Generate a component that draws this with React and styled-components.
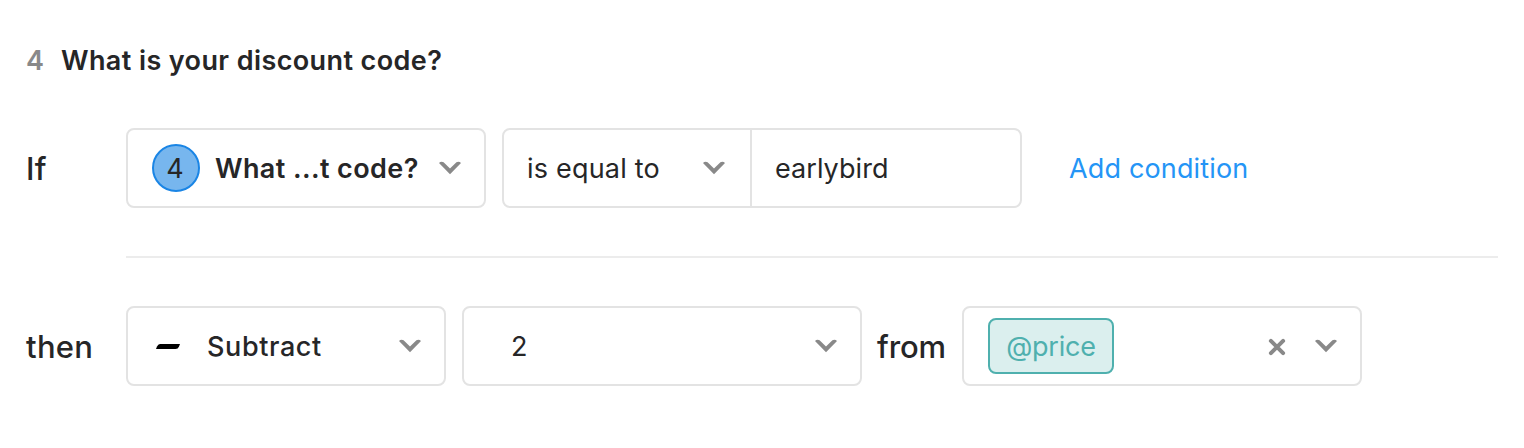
import React from "react";
import styled, { createGlobalStyle } from "styled-components";

const Chevron = () => (
  <ChevronIcon viewBox="0 0 24 16">
    <path d="M1 3 Q2.8 1.2 5.6 2.2 L12 8.5 L18.4 2.2 Q21.2 1.2 23 3 L12 14.3 Z" />
  </ChevronIcon>
);

export default function App() {
  return (
    <Page>
      <GlobalStyle />
      <Question>
        <QuestionNumber>4</QuestionNumber>
        <QuestionTitle>What is your discount code?</QuestionTitle>
      </Question>

      <Row>
        <Label>If</Label>
        <Select $width={360}>
          <Badge>4</Badge>
          <FieldName>What ...t code?</FieldName>
          <Chevron />
        </Select>
        <Comparison>
          <Operator>
            <Text $spacing={0.2}>is equal to</Text>
            <Chevron />
          </Operator>
          <Value>
            <Text $spacing={0.05}>earlybird</Text>
          </Value>
        </Comparison>
        <AddCondition>Add condition</AddCondition>
      </Row>

      <Divider />

      <Row>
        <Label>then</Label>
        <Select $width={320}>
          <MinusIcon viewBox="0 0 24 5">
            <path d="M4 0 H24 L23 2.5 Q22 5 19.5 5 H0 L1 2.5 Q2 0 4 0 Z" />
          </MinusIcon>
          <Text $spacing={0.6} $weight={500}>
            Subtract
          </Text>
          <Chevron />
        </Select>
        <Select $width={400} $indent={47}>
          <Text>2</Text>
          <Chevron />
        </Select>
        <From>from</From>
        <Select $width={400}>
          <Tag>@price</Tag>
          <ClearIcon viewBox="0 0 18 18">
            <path d="M2.9 2.9 L15.1 15.1 M15.1 2.9 L2.9 15.1" />
          </ClearIcon>
          <Chevron />
        </Select>
      </Row>
    </Page>
  );
}

const GlobalStyle = createGlobalStyle`
  * {
    box-sizing: border-box;
  }
  body {
    margin: 0;
    background: #fff;
    color: #262627;
    font-family: Inter, "Liberation Sans", sans-serif;
    font-size: 27px;
  }
`;

const Page = styled.div`
  height: 448px;
  padding: 40px 26px 0;
`;

const Question = styled.div`
  display: flex;
  height: 40px;
  line-height: 41px;
  font-weight: 600;
`;

const QuestionNumber = styled.span`
  width: 35px;
  color: #898989;
`;

const QuestionTitle = styled.span`
  letter-spacing: 0.4px;
`;

const Row = styled.div`
  display: flex;
  align-items: center;
  height: 80px;
  margin-top: 48px;
  white-space: nowrap;
`;

const Label = styled.span`
  width: 100px;
  padding-top: 1px;
  font-size: 31px;
  font-weight: 500;
  letter-spacing: 0.3px;
`;

const Select = styled.div`
  display: flex;
  align-items: center;
  flex-shrink: 0;
  width: ${props => props.$width}px;
  height: 80px;
  margin-right: 16px;
  padding: 0 22px 0 ${props => props.$indent || 24}px;
  border: 2px solid #e3e3e3;
  border-radius: 8px;
`;

const Badge = styled.span`
  width: 48px;
  height: 48px;
  margin-right: 15px;
  padding-right: 2px;
  border: 2px solid #1a85e5;
  border-radius: 50%;
  background: #77b6ee;
  line-height: 45px;
  text-align: center;
`;

const FieldName = styled.span`
  padding-top: 1px;
  font-weight: 600;
  letter-spacing: 0.4px;
`;

const ChevronIcon = styled.svg`
  flex-shrink: 0;
  width: 24px;
  height: 16px;
  margin-left: auto;
  fill: #898989;
`;

const Comparison = styled.div`
  display: flex;
  width: 520px;
  height: 80px;
  border: 2px solid #e3e3e3;
  border-radius: 8px;
`;

const Operator = styled.div`
  display: flex;
  align-items: center;
  width: 248px;
  padding: 0 24px 0 23px;
  border-right: 2px solid #e3e3e3;
`;

const Value = styled.div`
  display: flex;
  align-items: center;
  padding-left: 23px;
`;

const Text = styled.span`
  padding-top: 1px;
  font-weight: ${props => props.$weight || 400};
  letter-spacing: ${props => props.$spacing || 0}px;
`;

const AddCondition = styled.span`
  margin-left: 47px;
  padding-top: 1px;
  color: #2495f6;
  letter-spacing: 0.15px;
`;

const Divider = styled.div`
  height: 2px;
  margin-top: 48px;
  margin-left: 100px;
  background: #ececec;
`;

const MinusIcon = styled.svg`
  width: 24px;
  height: 5px;
  margin-left: 4px;
  margin-right: 27px;
  fill: #000;
`;

const From = styled.span`
  width: 69px;
  margin-left: -1px;
  margin-right: 16px;
  padding-top: 1px;
  font-size: 31px;
  font-weight: 500;
  letter-spacing: -0.1px;
`;

const Tag = styled.span`
  width: 126px;
  height: 56px;
  border: 2px solid #4fb0ae;
  border-radius: 8px;
  background: #dbefee;
  color: #4fb0ae;
  line-height: 53px;
  letter-spacing: -0.2px;
  text-align: center;
`;

const ClearIcon = styled.svg`
  width: 18px;
  height: 18px;
  margin-top: 2px;
  margin-left: auto;
  fill: none;
  stroke: #898989;
  stroke-width: 4;
  stroke-linecap: round;

  & + svg {
    margin-left: 28px;
  }
`;
